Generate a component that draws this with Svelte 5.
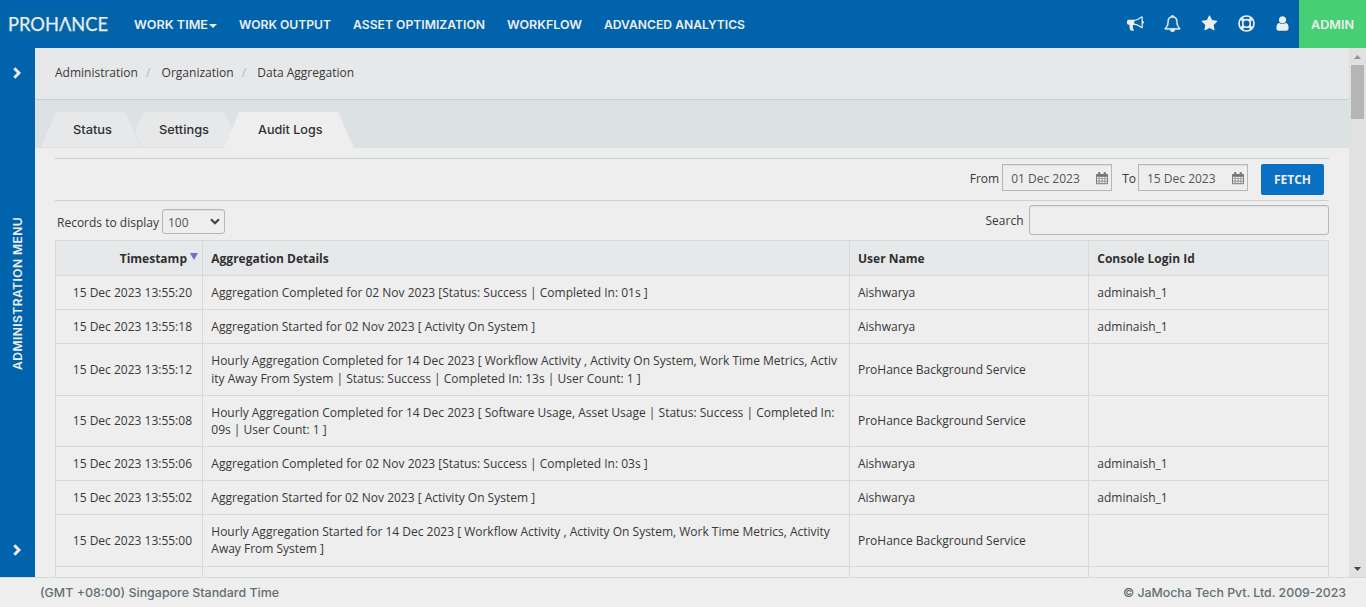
<script>
  const nav = [
    { label: 'WORK TIME', width: 74, caret: true },
    { label: 'WORK OUTPUT', width: 92 },
    { label: 'ASSET OPTIMIZATION', width: 132 },
    { label: 'WORKFLOW', width: 75 },
    { label: 'ADVANCED ANALYTICS', width: 141 },
  ];
  const crumbs = ['Administration', 'Organization', 'Data Aggregation'];
  const service = 'ProHance Background Service';
  const rows = [
    { time: '15 Dec 2023 13:55:20', lines: ['Aggregation Completed for 02 Nov 2023 [Status: Success | Completed In: 01s ]'], user: 'Aishwarya', login: 'adminaish_1', h: 34 },
    { time: '15 Dec 2023 13:55:18', lines: ['Aggregation Started for 02 Nov 2023 [ Activity On System ]'], user: 'Aishwarya', login: 'adminaish_1', h: 34 },
    { time: '15 Dec 2023 13:55:12', lines: ['Hourly Aggregation Completed for 14 Dec 2023 [ Workflow Activity , Activity On System, Work Time Metrics, Activ', 'ity Away From System | Status: Success | Completed In: 13s | User Count: 1 ]'], user: service, login: '', h: 52 },
    { time: '15 Dec 2023 13:55:08', lines: ['Hourly Aggregation Completed for 14 Dec 2023 [ Software Usage, Asset Usage | Status: Success | Completed In: ', '09s | User Count: 1 ]'], user: service, login: '', h: 51 },
    { time: '15 Dec 2023 13:55:06', lines: ['Aggregation Completed for 02 Nov 2023 [Status: Success | Completed In: 03s ]'], user: 'Aishwarya', login: 'adminaish_1', h: 34 },
    { time: '15 Dec 2023 13:55:02', lines: ['Aggregation Started for 02 Nov 2023 [ Activity On System ]'], user: 'Aishwarya', login: 'adminaish_1', h: 34 },
    { time: '15 Dec 2023 13:55:00', lines: ['Hourly Aggregation Started for 14 Dec 2023 [ Workflow Activity , Activity On System, Work Time Metrics, Activity', 'Away From System ]'], user: service, login: '', h: 52, tight: true },
    { time: '', lines: [], user: '', login: '', h: 34 },
  ];
</script>

{#snippet fit(text, width)}
  <svg class="fit" width={width} height="18"><text x="0" y="13" textLength={width} lengthAdjust="spacingAndGlyphs">{text}</text></svg>
{/snippet}

{#snippet calendar()}
  <svg class="calendar" width="12" height="13" viewBox="0 0 13 14">
    <path fill="#777" fill-rule="evenodd" d="M1 2h1.300V1a1 1 0 0 1 1-1h.4a1 1 0 0 1 1 1v1h3.600V1a1 1 0 0 1 1-1h.4a1 1 0 0 1 1 1v1H12a1 1 0 0 1 1 1v9.200a1 1 0 0 1-1 1H1a1 1 0 0 1-1-1V3a1 1 0 0 1 1-1zM1 5v1.900h2V5zm2.700 0v1.900h2.500V5zm3.200 0v1.900h2.400V5zM10 5v1.900h2V5zM1 7.600v1.900h2V7.600zm2.700 0v1.900h2.500V7.600zm3.200 0v1.900h2.400V7.600zm3.100 0v1.900h2V7.600zM1 10.200v2h2v-2zm2.700 0v2h2.500v-2zm3.200 0v2h2.400v-2zm3.100 0v2h2v-2z" />
  </svg>
{/snippet}

{#snippet chevron()}
  <svg width="8" height="12" viewBox="0 0 8 12"><path d="M1.300 1.300 6 6 1.300 10.700" fill="none" stroke="#eee" stroke-width="3" /></svg>
{/snippet}

<div class="app">
  <header>
    <div class="logo">
      <svg width="104" height="24"><text x="1" y="19" textLength="100" lengthAdjust="spacingAndGlyphs">PROHΛNCE</text></svg>
    </div>
    <nav>
      {#each nav as item}
        <a class:has-caret={item.caret}>{@render fit(item.label, item.width)}{#if item.caret}<i class="caret"></i>{/if}</a>
      {/each}
    </nav>
    <div class="tools">
      <svg width="17" height="17" viewBox="0 0 1792 1792"><path d="M1664 640q53 0 90.500 37.500t37.500 90.500-37.500 90.500-90.500 37.500v384q0 52-38 90t-90 38q-417-347-812-380-58 19-91 66t-31 100.500 40 92.500q-20 33-23 65.500t6 58 33.500 55 48 50 61.500 50.500q-29 58-111.500 83t-168.500 11.500-132-55.500q-7-23-29.500-87.500t-32-94.500-23-89-15-101 3.500-98.500 22-110.500h-122q-66 0-113-47t-47-113v-192q0-66 47-113t113-47h480q435 0 896-384 52 0 90 38t38 90v384zm-128 604v-954q-394 302-768 343v270q377 42 768 341z" /></svg>
      <svg class="bell" width="17" height="17" viewBox="0 0 1792 1792"><path d="M912 1696q0-16-16-16-59 0-101.500-42.500t-42.500-101.500q0-16-16-16t-16 16q0 73 51.500 124.500t124.500 51.500q16 0 16-16zm-666-288h1300q-266-300-266-832 0-51-24-105t-69-103-121.500-80.500-169.500-31.500-169.500 31.500-121.500 80.500-69 103-24 105q0 532-266 832zm1482 0q0 52-38 90t-90 38h-448q0 106-75 181t-181 75-181-75-75-181h-448q-52 0-90-38t-38-90q50-42 91-88t85-119.500 74.500-158.500 50-206 19.500-260q0-152 117-282.500t307-158.500q-8-19-8-39 0-40 28-68t68-28 68 28 28 68q0 20-8 39 190 28 307 158.500t117 282.500q0 139 19.500 260t50 206 74.500 158.500 85 119.500 91 88z" /></svg>
      <svg width="17" height="17" viewBox="0 0 1792 1792"><path d="M1728 647q0 22-26 48l-363 354 86 500q1 7 1 20 0 21-10.500 35.500t-30.500 14.500q-19 0-40-12l-449-236-449 236q-22 12-40 12-21 0-31.500-14.500t-10.500-35.500q0-6 2-20l86-500-364-354q-25-27-25-48 0-37 56-46l502-73 225-455q19-41 49-41t49 41l225 455 502 73q56 9 56 46z" /></svg>
      <svg width="17" height="17" viewBox="0 0 17 17" class="ring"><circle cx="8.500" cy="8.500" r="7.500" /><circle cx="8.500" cy="8.500" r="3.800" /><path d="m3.300 3.300 2.500 2.500m5.400 5.400 2.500 2.500m0-10.400-2.500 2.500m-5.400 5.400-2.500 2.500" /></svg>
      <svg class="user" width="17" height="17" viewBox="0 0 1792 1792"><path d="M1536 1399q0 109-62.500 187t-150.500 78h-854q-88 0-150.500-78t-62.500-187q0-85 8.500-160.500t31.500-152 58.500-131 94-89 134.500-34.500q131 128 313 128t313-128q76 0 134.500 34.500t94 89 58.500 131 31.500 152 8.500 160.500zm-256-887q0 159-112.500 271.500t-271.500 112.500-271.500-112.500-112.500-271.500 112.500-271.500 271.500-112.500 271.500 112.500 112.500 271.500z" /></svg>
    </div>
    <div class="admin">{@render fit('ADMIN', 43)}</div>
  </header>

  <div class="middle">
    <aside>
      {@render chevron()}
      <span class="menu">ADMINISTRATION MENU</span>
      {@render chevron()}
    </aside>

    <main>
      <div class="crumbs">
        {#each crumbs as c, i}{#if i}<i>/</i>{/if}<span>{c}</span>{/each}
      </div>
      <div class="tabs">
        <div class="tab status">{@render fit('Status', 39)}</div>
        <div class="tab settings">{@render fit('Settings', 50)}</div>
        <div class="tab audit">{@render fit('Audit Logs', 64.5)}</div>
      </div>

      <div class="body">
        <div class="filter">
          <span class="label">From</span>
          <div class="date"><span>01 Dec 2023</span>{@render calendar()}</div>
          <span class="label to">To</span>
          <div class="date"><span>15 Dec 2023</span>{@render calendar()}</div>
          <button>FETCH</button>
        </div>
        <div class="controls">
          <span class="records">Records to display</span>
          <div class="select">100<svg width="10" height="7" viewBox="0 0 10 7"><path d="m1 1.200 4 4 4-4" fill="none" stroke="#444" stroke-width="2.200" /></svg></div>
          <span class="search-label">Search</span>
          <div class="search"></div>
        </div>
        <div class="table">
          <div class="row head">
            <div class="time">Timestamp<i class="sort"></i></div>
            <div>Aggregation Details</div>
            <div class="name">User Name</div>
            <div>Console Login Id</div>
          </div>
          {#each rows as r}
            <div class="row" class:tight={r.tight} style="height: {r.h}px">
              <div class="time">{r.time}</div>
              <div class="details">{#each r.lines as line}<span>{line}</span>{/each}</div>
              <div class="name">{r.user}</div>
              <div>{r.login}</div>
            </div>
          {/each}
        </div>
      </div>
    </main>

    <div class="scrollbar">
      <svg width="7" height="4"><path d="M0 4 3.500 0 7 4z" fill="#949494" /></svg>
      <div class="thumb"></div>
      <svg width="7" height="4"><path d="M0 0 3.500 4 7 0z" fill="#454545" /></svg>
    </div>
  </div>

  <footer>
    {@render fit('(GMT +08:00) Singapore Standard Time', 239)}
    {@render fit('© JaMocha Tech Pvt. Ltd. 2009-2023', 223)}
  </footer>
</div>

<style>
  :global(body) { margin: 0; overflow: hidden; }
  .app { display: flex; flex-direction: column; width: 1366px; height: 607px; background: #eee; color: #383838; font: 12px/17.140px "Open Sans", sans-serif; overflow: hidden; }
  .app * { box-sizing: border-box; }
  svg { display: block; flex: none; }
  i { font-style: normal; }
  .fit { overflow: visible; font: 500 12.200px/18px Inter, sans-serif; fill: currentColor; }

  header { display: flex; height: 48px; flex: none; background: #0063ac; color: #eee; }
  .logo { width: 134px; padding: 12px 0 0 7px; }
  .logo svg { overflow: visible; font: 400 19.500px Lato, sans-serif; fill: #e6edf2; stroke: #e6edf2; stroke-width: .25; background: #0464a6; }
  nav { display: flex; gap: 22px; padding-top: 16px; }
  nav a { display: flex; }
  nav .fit, .admin .fit { font-weight: 600; font-size: 12px; }
  nav .has-caret { width: 83px; }
  .caret { margin: 8px 0 0 1px; width: 0; height: 0; flex: none; border: 4px solid transparent; border-top-color: #eee; border-bottom: 0; }
  .tools { display: flex; gap: 20px; margin-left: auto; margin-right: 7.500px; padding-top: 15px; fill: #eee; }
  .bell { stroke: #eee; stroke-width: 40; }
  .tools .user { margin-left: -.7px; margin-right: .7px; }
  .ring { fill: none; stroke: #eee; stroke-width: 1.700; }
  .ring path { stroke-width: 3.200; }
  .admin { width: 67px; padding: 16px 0 0 12px; background: #47cf75; }

  .middle { display: flex; height: 529px; flex: none; }
  aside { display: flex; flex-direction: column; align-items: center; justify-content: space-between; width: 35px; padding: 19px 1px 21px 0; background: #0063ac; }
  .menu { writing-mode: vertical-rl; transform: rotate(180deg); color: #eee; font: 600 12px/17px Inter, sans-serif; letter-spacing: .45px; margin-bottom: 37px; white-space: nowrap; }

  main { width: 1314px; overflow: hidden; }
  .crumbs { display: flex; height: 52px; padding: 16px 0 0 20px; background: #e7e8ea; border-bottom: 1px solid #c4cfcc; white-space: nowrap; }
  .crumbs i { width: 23.700px; text-align: center; color: #b5b5b5; padding-right: 3px; }
  .tabs { display: flex; height: 48px; padding-top: 12px; background: #dce1e3; }
  .tab { display: flex; height: 36px; padding-top: 9px; background: #e6e8ea; color: #303030; }
  .tab.status { width: 101px; margin-left: 6px; padding-left: 32px; height: 35px; clip-path: polygon(15px 0, 84px 0, 100px 100%, 0 100%); }
  .tab.settings { width: 100px; margin-left: -9px; padding-left: 26px; height: 35px; clip-path: polygon(11px 0, 91px 0, 100px 19px, 100px 100%, 9px 100%, 2px 19px); }
  .tab.audit { width: 130px; margin-left: -9px; padding-left: 34px; background: #eee; clip-path: polygon(15px 0, 114px 0, 130px 100%, 0 100%); }

  .body { margin: 10px 20px 0; }
  .filter { display: flex; height: 43px; padding-top: 5px; border-top: 1px solid #cbd2d2; border-bottom: 1px solid #cbd2d2; }
  .label { padding-top: 6px; margin-right: 3px; }
  .label:first-child { margin-left: auto; }
  .label.to { margin-left: 10px; margin-right: 2px; }
  .date { display: flex; justify-content: space-between; width: 110px; height: 27px; padding: 5px 3px 0 8px; border: 1px solid #b7b7b7; box-shadow: inset 0 1px 1px #0001; color: #555; }
  .calendar { margin-top: 2px; }
  button { width: 63px; height: 31px; margin: 0 5px 0 13px; padding: 0; border: 0; border-radius: 2px; background: #0970c3; color: #eee; font: 700 12px/31px "Open Sans", sans-serif; }
  .controls { display: flex; height: 39px; padding: 4px 0 0 2px; }
  .records { padding-top: 9px; width: 105px; }
  .select { display: flex; justify-content: space-between; width: 63px; height: 25px; margin-top: 4px; padding: 4px 4px 0 5px; border: 1px solid #b7b7b7; border-radius: 3px; color: #555; box-shadow: inset 0 1px 1px #0001; }
  .select svg { margin-top: 4px; }
  .search-label { margin: 7px 5.500px 0 auto; }
  .search { width: 300px; height: 30px; border: 1px solid #b7b7b7; border-radius: 3px; box-shadow: inset 0 1px 1px #0001; }

  .table { border: solid #d4d9d9; border-width: 1px 1px 0 0; width: 1274px; }
  .row { display: grid; grid-template-columns: 147px 647px 239px 240px; border-bottom: 1px solid #d4d9d9; white-space: pre; }
  .row > div { display: flex; flex-direction: column; justify-content: center; padding-left: 8.300px; border-left: 1px solid #d4d9d9; }
  .row > .name { padding-left: 8px; }
  .row > .time { align-items: flex-end; padding: 0 10px 0 0; }
  .row.tight { line-height: 17px; }
  .row.tight > .details { padding-bottom: 1px; }
  .head { height: 35px; background: #e7e8ea; font-weight: 700; color: #303030; }
  .row.head > div { padding-top: 1px; }
  .row.head > .time { flex-direction: row; align-items: center; justify-content: flex-end; padding-right: 4px; }
  .sort { margin: -5px 0 0 3px; border: 4px solid transparent; border-top: 7px solid #6c71cf; border-bottom: 0; }

  .scrollbar { display: flex; flex-direction: column; align-items: center; width: 17px; padding: 7px 0 6px; background: #e1e1e1; }
  .thumb { width: 13px; height: 54px; margin: 6px 0 auto; background: #b5b5b5; }
  footer { display: flex; justify-content: space-between; height: 30px; padding: 6px 20px 0 39.500px; border-top: 1px solid #d5d9da; color: #5f6f75; }
</style>
